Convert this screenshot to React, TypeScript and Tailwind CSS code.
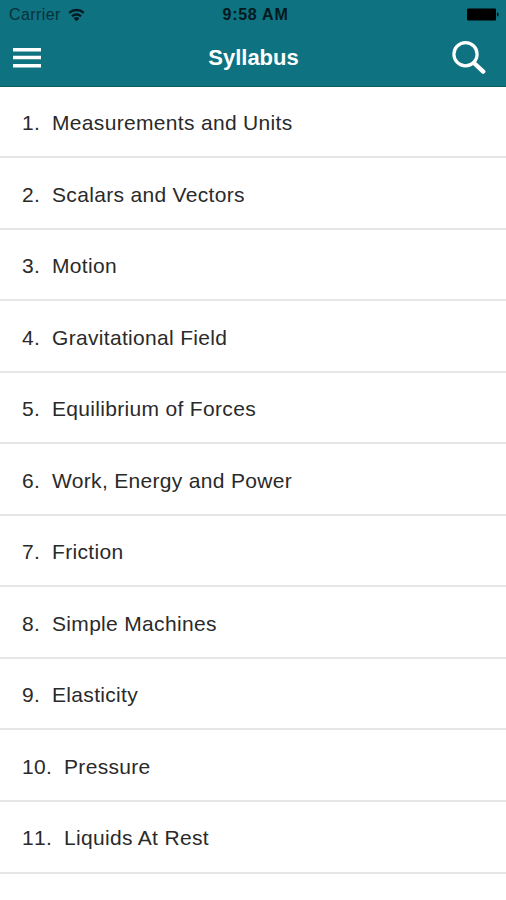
import { useState } from 'react';

const topics = [
  'Measurements and Units',
  'Scalars and Vectors',
  'Motion',
  'Gravitational Field',
  'Equilibrium of Forces',
  'Work, Energy and Power',
  'Friction',
  'Simple Machines',
  'Elasticity',
  'Pressure',
  'Liquids At Rest',
];

function StatusBar() {
  return (
    <div className="flex h-[29px] items-center justify-between pl-[9px] pr-[7px]">
      <div className="flex w-[120px] items-center gap-[7px] text-[#06303a]">
        <span className="text-[16px] tracking-[0.4px]">Carrier</span>
        <svg className="text-[#021a20]" width="17" height="14" viewBox="0 0 17 14" fill="none" stroke="currentColor" strokeWidth="2.4">
          <path d="M1.2 4.8a11 11 0 0 1 14.6 0" />
          <path d="M4 8.3a6.6 6.6 0 0 1 9 0" />
          <path d="M8.5 13.3 5.7 10.4a4 4 0 0 1 5.6 0z" fill="currentColor" stroke="none" />
        </svg>
      </div>
      <span className="pl-[3px] text-[16px] font-bold tracking-[0.75px] text-[#04191e]">9:58 AM</span>
      <div className="flex w-[120px] justify-end text-black">
        <svg width="33" height="13" viewBox="0 0 33 13" fill="currentColor">
          <rect x="1" y="0.5" width="29" height="12" rx="1" />
          <path d="M31 4.5c2.2.5 2.2 3.5 0 4z" />
        </svg>
      </div>
    </div>
  );
}

export default function App() {
  const [selected, setSelected] = useState<number | null>(null);

  return (
    <div className="h-[900px] w-[506px] overflow-hidden bg-white font-['Liberation_Sans',sans-serif]">
      <header className="h-[86.5px] border-b border-[#0a5c69] bg-[#0e7280]">
        <StatusBar />
        <div className="grid h-[57px] grid-cols-[34px_1fr_34px] items-center pl-[13px] pr-5 text-white">
          <button aria-label="Menu">
            <svg width="28" height="22" viewBox="0 0 28 22" fill="white">
              <path d="M0 1h28v3.5H0zM0 8.7h28v3.5H0zM0 17h28v3.5H0z" />
            </svg>
          </button>
          <h1 className="pl-[8px] text-center text-[22px] font-bold">Syllabus</h1>
          <button aria-label="Search">
            <svg width="34" height="34" viewBox="0 0 34 34" fill="none" stroke="white" strokeWidth="3.2">
              <circle cx="13.5" cy="13.2" r="11.6" />
              <path d="m22 22 9.2 8.6" strokeWidth="4.4" strokeLinecap="round" />
            </svg>
          </button>
        </div>
      </header>
      <ol>
        {topics.map((topic, i) => (
          <li
            key={topic}
            onClick={() => setSelected(i)}
            aria-current={selected === i}
            className="flex h-[71.55px] items-center border-b-2 border-[#e6e6e6] pl-[22px] pt-[3px] text-[21px] tracking-[0.32px] text-[#2a2a2a]"
          >
            <span className={i < 9 ? 'w-[30px]' : 'w-[42px] [font-kerning:none]'}>{i + 1}.</span>
            <span>{topic}</span>
          </li>
        ))}
      </ol>
    </div>
  );
}
